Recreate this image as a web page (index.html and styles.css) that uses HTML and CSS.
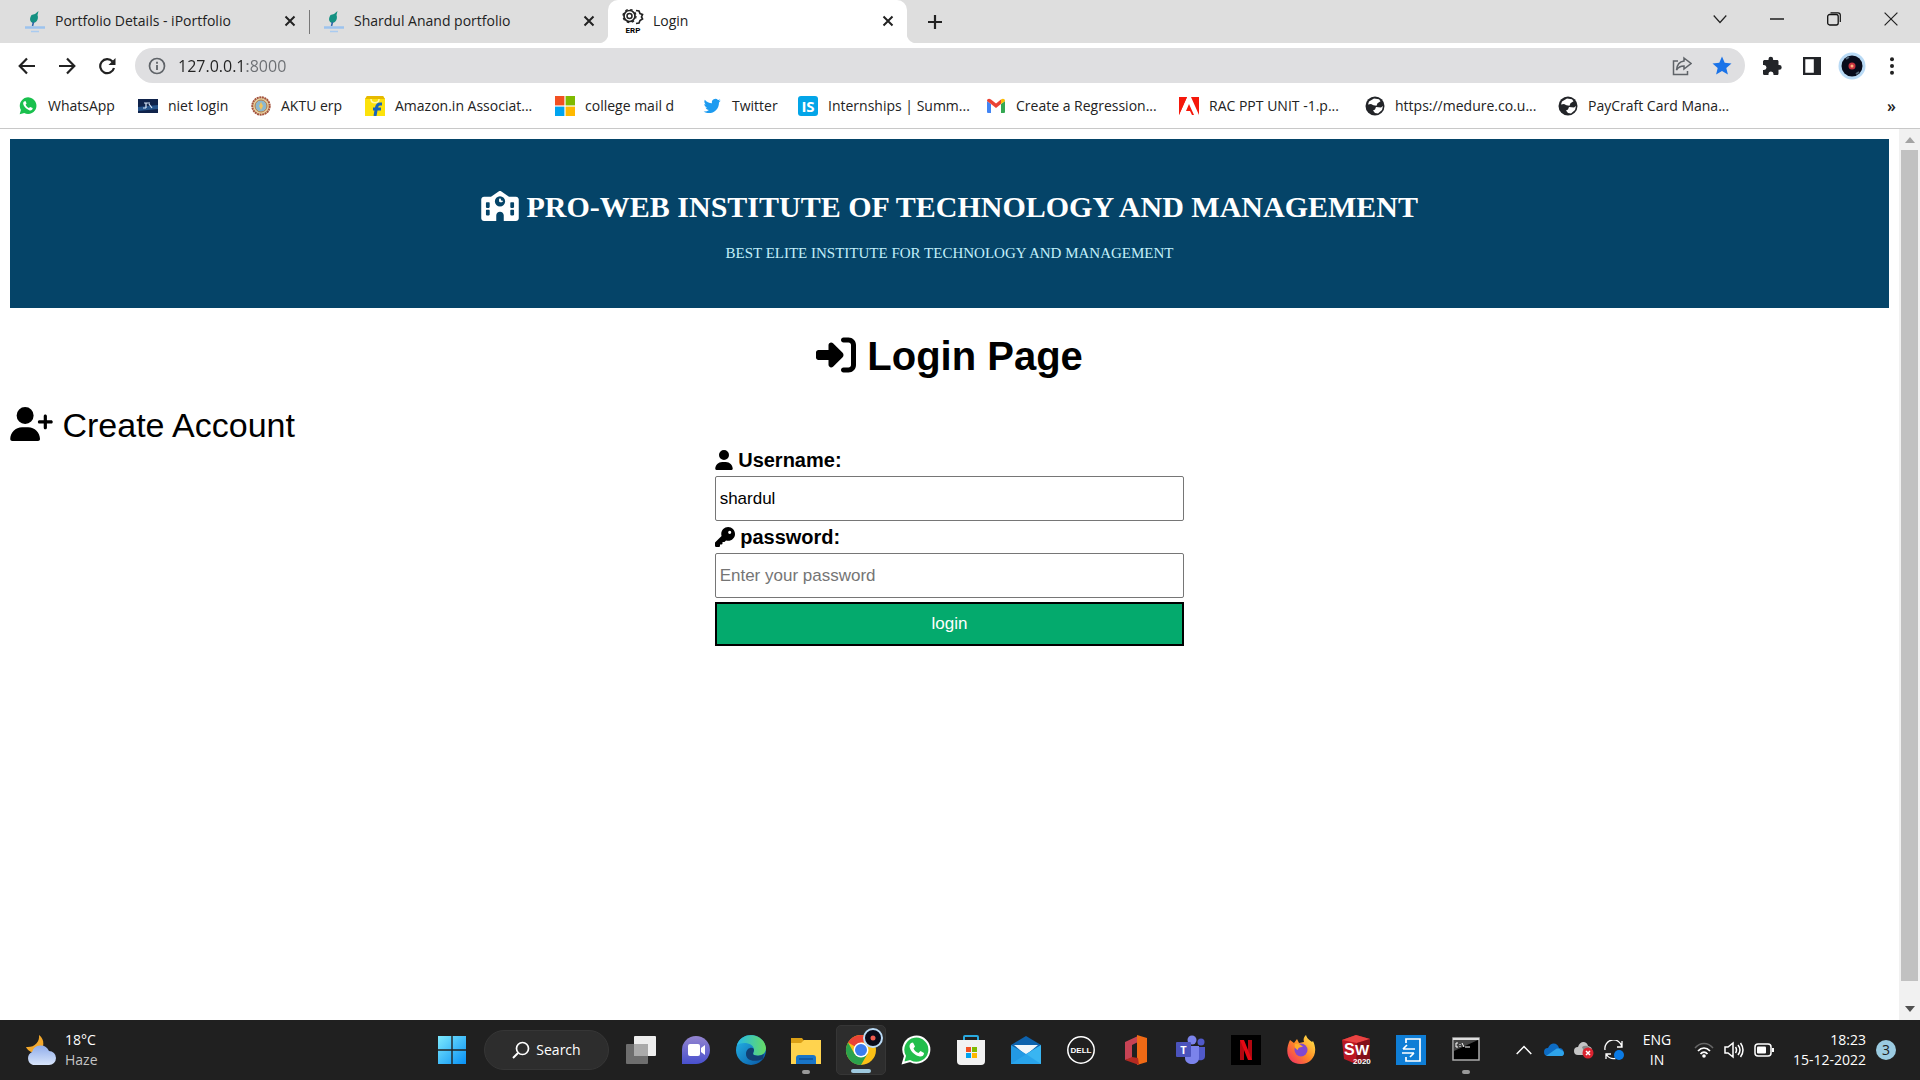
FILE: index.html
```html
<!DOCTYPE html>
<html lang="en">
<head>
<meta charset="utf-8">
<title>Login</title>
<link rel="stylesheet" href="styles.css">
</head>
<body>
<svg class="defs" aria-hidden="true">
  <defs>
    <symbol id="close" viewBox="0 0 12 12"><path d="M1.500 1.500l9 9M10.500 1.500l-9 9" fill="none" stroke="#222" stroke-width="2"/></symbol>
    <symbol id="plant" viewBox="0 0 22 24"><path d="M7.500 6l3.500-1 3.500-3-1 4c1.500 4-1 8-4.500 8-3-1-4-4-1.500-8z" fill="#149182"/><path d="M9.500 13l-1 4" stroke="#2b63a8" stroke-width="1.500"/><path d="M1 18.500h20" stroke="#9cc3ee" stroke-width="2.500"/><path d="M7 22.500h8" stroke="#a9cbf0" stroke-width="1.500"/></symbol>
    <symbol id="whatsapp" viewBox="0 0 24 24"><path d="M2 22l1.500-5.300A10 10 0 1 1 7.500 20.500z" fill="#19c04d"/><path d="M7.200 6.500l1.800-.4 1.300 3-1.200 1.500c.9 1.800 2.200 3 4 3.900l1.500-1.400 3 1.400c.3 2.300-2 3.400-3.600 2.900C9.700 16 6.200 11.500 6.200 8.800c0-1 .4-1.800 1-2.300z" fill="#fff"/></symbol>
    <symbol id="globe" viewBox="0 0 20 20"><circle cx="10" cy="10" r="9.500" fill="#222428"/><path d="M9 2.500l5 .8 1.500 2-3 2-1 2.500-3-.5L6 8l-3 .5 1-3zM11 11l5 .5 2-1.500-1 4-4 3.500-3-.5-2-2.500 2-1z" fill="#fff"/></symbol>
  </defs>
</svg>
<div class="screen">
  <header class="browser">
    <div class="tabs">
      <div class="tab"><svg class="fav"><use href="#plant"/></svg><span>Portfolio Details - iPortfolio</span><button class="tab-close" aria-label="Close tab"><svg><use href="#close"/></svg></button></div>
      <div class="tab divided"><svg class="fav"><use href="#plant"/></svg><span>Shardul Anand portfolio</span><button class="tab-close" aria-label="Close tab"><svg><use href="#close"/></svg></button></div>
      <div class="tab active"><svg class="fav" viewBox="0 0 22 24"><circle cx="7.500" cy="7" r="5.500" fill="none" stroke="#222" stroke-width="1.700"/><circle cx="7.500" cy="7" r="6.500" fill="none" stroke="#222" stroke-width="1.300" stroke-dasharray="2.500 2.600"/><circle cx="7.500" cy="7" r="2.500" fill="none" stroke="#222" stroke-width="1.500"/><path d="M14 1.500l3 .5 1 2.500 2.500 1-1 2.500 1 2-2.500 1.500-1 2.500-3 .5" fill="none" stroke="#222" stroke-width="1.700"/><text x="11" y="23.500" text-anchor="middle" font-size="8" font-weight="700" font-family="Roboto">ERP</text></svg><span>Login</span><button class="tab-close" aria-label="Close tab"><svg><use href="#close"/></svg></button></div>
      <button class="new-tab" aria-label="New tab"><svg width="16" height="16" viewBox="0 0 16 16"><path d="M8 1v14M1 8h14" stroke="#222" stroke-width="2.200"/></svg></button>
      <div class="window-controls">
        <button aria-label="Search tabs"><svg width="14" height="10" viewBox="0 0 14 10"><path d="M.7 1.500L7 8.500l6.300-7" fill="none" stroke="#222" stroke-width="1.200"/></svg></button>
        <button aria-label="Minimize"><svg width="14" height="10" viewBox="0 0 14 10"><path d="M0 5h14" stroke="#111" stroke-width="1.400"/></svg></button>
        <button aria-label="Restore"><svg width="14" height="14" viewBox="0 0 14 14"><rect x=".7" y="2.500" width="10.500" height="10.500" rx="2" fill="none" stroke="#111" stroke-width="1.300"/><path d="M3.500.8H11c1.300 0 2.300 1 2.300 2.300V10" fill="none" stroke="#111" stroke-width="1.200"/></svg></button>
        <button aria-label="Close"><svg width="14" height="14" viewBox="0 0 14 14"><path d="M.6.600l12.800 12.800M13.400.600L.6 13.400" stroke="#222" stroke-width="1.200"/></svg></button>
      </div>
    </div>
    <div class="toolbar">
      <nav class="history">
        <button aria-label="Back"><svg width="18" height="18" viewBox="0 0 18 18"><path d="M17 9H2M9 1.500L1.700 9 9 16.500" fill="none" stroke="#222" stroke-width="2.200"/></svg></button>
        <button aria-label="Forward"><svg width="18" height="18" viewBox="0 0 18 18"><path d="M1 9h15M9 1.500L16.300 9 9 16.500" fill="none" stroke="#222" stroke-width="2.200"/></svg></button>
        <button aria-label="Reload"><svg width="18" height="18" viewBox="0 0 18 18"><path d="M14.500 4.500A7 7 0 1 0 16 11" fill="none" stroke="#222" stroke-width="2.200"/><path d="M17.500 1v7h-7z" fill="#222"/></svg></button>
      </nav>
      <div class="omnibox">
        <svg width="18" height="18" viewBox="0 0 18 18"><circle cx="9" cy="9" r="7.500" fill="none" stroke="#5f6368" stroke-width="1.700"/><path d="M9 8v5M9 4.700v2" stroke="#5f6368" stroke-width="1.800"/></svg>
        <input class="url" type="text" value="127.0.0.1:8000" aria-label="Address">
        <button aria-label="Share"><svg width="20" height="20" viewBox="0 0 20 20"><path d="M6 5H1.500v13.500h14V15" fill="none" stroke="#5f6368" stroke-width="1.500"/><path d="M12 2l7 5.500-7 5.500v-3c-4 0-6 1.500-7.500 4C5 9 7.500 5.500 12 5z" fill="none" stroke="#5f6368" stroke-width="1.500"/></svg></button>
        <button aria-label="Bookmark"><svg width="20" height="20" viewBox="0 0 20 20"><path d="M10 .5l2.700 6.300 6.800.600-5.200 4.500 1.600 6.700L10 15l-5.900 3.600 1.600-6.700L.5 7.400l6.800-.6z" fill="#1a73e8"/></svg></button>
      </div>
      <div class="actions">
        <button aria-label="Extensions"><svg width="20" height="20" viewBox="0 0 20 20"><path d="M1 5.500C1 4.500 2 4 2.800 4H6.500V3a2.300 2.300 0 0 1 4.600 0v1H15c1 0 1.500.7 1.500 1.500V9h.8a2.400 2.400 0 0 1 0 4.800h-.8v3.700c0 1-.7 1.500-1.500 1.500h-3.500v-1a2.500 2.500 0 0 0-5 0v1H2.800C1.700 19 1 18.500 1 17.500V14h1a2.500 2.500 0 0 0 0-5H1z" fill="#222428"/></svg></button>
        <button aria-label="Side panel"><svg width="18" height="18" viewBox="0 0 18 18"><path d="M0 0h18v18H0zM2.300 2.300v13.400h8.500V2.300z" fill="#222428" fill-rule="evenodd"/></svg></button>
        <button aria-label="Profile"><svg width="28" height="28" viewBox="0 0 28 28"><circle cx="14" cy="14" r="13.500" fill="#b9daf5"/><circle cx="14" cy="14" r="10.500" fill="#080b1b"/><path d="M8 7l3-2M18 22l3-2" stroke="#53677a" stroke-width="2"/><circle cx="14" cy="14" r="3.500" fill="#c5313f"/><circle cx="14" cy="14" r="1.500" fill="#ffb27c"/></svg></button>
        <button aria-label="Menu"><svg width="6" height="18" viewBox="0 0 6 18"><g fill="#222"><circle cx="3" cy="2.200" r="2"/><circle cx="3" cy="9" r="2"/><circle cx="3" cy="15.800" r="2"/></g></svg></button>
      </div>
    </div>
    <nav class="bookmarks">
      <a href="#"><svg><use href="#whatsapp"/></svg>WhatsApp</a>
      <a href="#"><svg viewBox="0 0 20 20"><path d="M0 3h20v14H0z" fill="#10234b"/><path d="M0 11l20-2v4L0 15z" fill="#27558c"/><path d="M6 7h6M8 7v5M11 8l3 4M5 12h3" stroke="#dce9fa" stroke-width="1.200"/></svg>niet login</a>
      <a href="#"><svg viewBox="0 0 20 20"><circle cx="10" cy="10" r="8.700" fill="#e8d3a2" stroke="#a4533d" stroke-width="2" stroke-dasharray="2 .6"/><circle cx="10" cy="10" r="6" fill="#8bb8cf" stroke="#b77c46"/><path d="M10 6l2 4-2 4-2-4z" fill="#f3c55c"/></svg>AKTU erp</a>
      <a href="#"><svg viewBox="0 0 20 20"><path d="M0 3L2 0h16l2 3v17H0z" fill="#fce20b"/><path d="M0 3L2 0h16l2 3z" fill="#e6b900"/><path d="M6 3c0 5 8 5 8 0" fill="none" stroke="#fff7a5" stroke-width="1.500"/><path d="M17 8h-2c-2 0-3 1-3.500 3.500L10 20M8 13h8" fill="none" stroke="#1864bd" stroke-width="3"/></svg>Amazon.in Associat...</a>
      <a href="#"><svg viewBox="0 0 20 20"><path d="M0 0h9.400v9.400H0z" fill="#f25022"/><path d="M10.600 0H20v9.400h-9.400z" fill="#7fba00"/><path d="M0 10.600h9.400V20H0z" fill="#00a4ef"/><path d="M10.600 10.600H20V20h-9.400z" fill="#ffb900"/></svg>college mail d</a>
      <a href="#"><svg viewBox="0 0 24 24"><path d="M22.500 5.500c-.8.4-1.600.6-2.400.7.900-.5 1.500-1.300 1.800-2.300-.8.5-1.700.8-2.700 1a4.200 4.200 0 0 0-7.200 3.900C8.500 8.600 5.400 6.900 3.400 4.400c-1.100 1.900-.6 4.400 1.300 5.700-.7 0-1.300-.2-1.900-.5 0 2 1.400 3.800 3.400 4.200-.6.200-1.300.2-1.900.1.500 1.700 2.100 2.900 4 2.900A8.500 8.500 0 0 1 2 18.600C9.700 23.500 20.500 18.400 20.400 7.700c.8-.6 1.500-1.300 2.100-2.200z" fill="#1d9bf0"/></svg>Twitter</a>
      <a href="#"><svg viewBox="0 0 20 20"><rect width="20" height="20" rx="3" fill="#03a5e8"/><text x="10" y="15.500" text-anchor="middle" font-size="15" font-weight="700" font-family="Open Sans" fill="#fff">IS</text></svg>Internships | Summ...</a>
      <a href="#"><svg viewBox="0 0 20 20"><path d="M1 5l4 3v9H2q-1 0-1-1z" fill="#4285f4"/><path d="M15 8l4-3v11q0 1-1 1h-3z" fill="#34a853"/><path d="M1 5c0-2 2-3 4-1.500L10 7.500l5-4V8l-5 4-5-4-4-3z" fill="#ea4335"/><path d="M15 3.500c2-1.500 4-.5 4 1.500L15 8z" fill="#fbbc04"/></svg>Create a Regression...</a>
      <a href="#"><svg viewBox="0 0 20 20"><path d="M0 1h20v18H0z" fill="#f5180b"/><path d="M8 1h4l8 18h-5L10 8l-3 7h4l2 4H0z" fill="#fff"/><path d="M0 1h8L0 19z" fill="#f5180b"/></svg>RAC PPT UNIT -1.p...</a>
      <a href="#"><svg><use href="#globe"/></svg>https://medure.co.u...</a>
      <a href="#"><svg><use href="#globe"/></svg>PayCraft Card Mana...</a>
      <button class="more">»</button>
    </nav>
  </header>
  <div class="viewport">
    <main class="page">
      <section class="banner">
        <h1><svg width="38" height="30" viewBox="0 0 640 512"><path fill="currentColor" fill-rule="evenodd" d="M337.800 5.400C327-1.800 313-1.800 302.200 5.400L166.300 96 48 96C21.500 96 0 117.500 0 144L0 464c0 26.500 21.500 48 48 48l208 0 0-96c0-35.300 28.700-64 64-64s64 28.700 64 64l0 96 208 0c26.500 0 48-21.500 48-48l0-320c0-26.500-21.500-48-48-48L473.700 96zM96 192l32 0c8.800 0 16 7.200 16 16l0 64c0 8.800-7.200 16-16 16l-32 0c-8.800 0-16-7.200-16-16l0-64c0-8.800 7.200-16 16-16zM96 320l32 0c8.800 0 16 7.200 16 16l0 64c0 8.800-7.200 16-16 16l-32 0c-8.800 0-16-7.200-16-16l0-64c0-8.800 7.200-16 16-16zM496 208c0-8.800 7.200-16 16-16l32 0c8.800 0 16 7.200 16 16l0 64c0 8.800-7.200 16-16 16l-32 0c-8.800 0-16-7.200-16-16zM496 336c0-8.800 7.200-16 16-16l32 0c8.800 0 16 7.200 16 16l0 64c0 8.800-7.200 16-16 16l-32 0c-8.800 0-16-7.200-16-16zM232 176a88 88 0 1 1 176 0 88 88 0 1 1 -176 0zm88-48c-8.800 0-16 7.200-16 16l0 32c0 8.800 7.200 16 16 16l32 0c8.800 0 16-7.200 16-16s-7.200-16-16-16l-16 0 0-16c0-8.800-7.200-16-16-16z"/></svg> PRO-WEB INSTITUTE OF TECHNOLOGY AND MANAGEMENT</h1>
        <p>BEST ELITE INSTITUTE FOR TECHNOLOGY AND MANAGEMENT</p>
      </section>
      <h2 class="title"><svg width="40" height="40" viewBox="0 0 512 512"><path d="M217.900 105.900L340.700 228.700c7.200 7.200 11.300 17.100 11.300 27.300s-4.100 20.100-11.300 27.300L217.900 406.100c-6.400 6.400-15 9.900-24 9.900c-18.700 0-33.900-15.200-33.900-33.900l0-62.100L32 320c-17.700 0-32-14.300-32-32l0-64c0-17.700 14.300-32 32-32l128 0 0-62.100c0-18.700 15.200-33.900 33.900-33.900c9 0 17.600 3.600 24 9.900zM352 416l64 0c17.700 0 32-14.300 32-32l0-256c0-17.700-14.300-32-32-32l-64 0c-17.700 0-32-14.300-32-32s14.300-32 32-32l64 0c53 0 96 43 96 96l0 256c0 53-43 96-96 96l-64 0c-17.700 0-32-14.300-32-32s14.300-32 32-32z"/></svg> Login Page</h2>
      <a class="create" href="#"><svg width="43" height="34" viewBox="0 0 640 512"><path d="M96 128a128 128 0 1 1 256 0A128 128 0 1 1 96 128zM0 482.300C0 383.800 79.800 304 178.300 304l91.400 0C368.200 304 448 383.800 448 482.300c0 16.400-13.300 29.700-29.700 29.700L29.700 512C13.300 512 0 498.700 0 482.300zM504 312l0-64-64 0c-13.300 0-24-10.700-24-24s10.700-24 24-24l64 0 0-64c0-13.300 10.700-24 24-24s24 10.700 24 24l0 64 64 0c13.300 0 24 10.700 24 24s-10.700 24-24 24l-64 0 0 64c0 13.300-10.700 24-24 24s-24-10.700-24-24z"/></svg> Create Account</a>
      <form class="login">
        <label for="username"><svg width="18" height="20" viewBox="0 0 448 512"><path d="M224 256A128 128 0 1 0 224 0a128 128 0 1 0 0 256zm-45.700 48C79.800 304 0 383.800 0 482.300C0 498.700 13.300 512 29.700 512l388.600 0c16.400 0 29.700-13.300 29.700-29.700C448 383.800 368.200 304 269.700 304l-91.400 0z"/></svg> Username:</label>
        <input id="username" type="text" value="shardul">
        <label for="password"><svg width="20" height="20" viewBox="0 0 512 512"><path d="M336 352c97.200 0 176-78.800 176-176S433.200 0 336 0S160 78.800 160 176c0 18.700 2.900 36.800 8.300 53.700L7 391c-4.500 4.500-7 10.600-7 17l0 80c0 13.300 10.700 24 24 24l80 0c13.300 0 24-10.700 24-24l0-40 40 0c13.300 0 24-10.700 24-24l0-40 40 0c6.400 0 12.500-2.500 17-7l33.300-33.300c16.900 5.400 35 8.300 53.700 8.300zM376 96a40 40 0 1 1 0 80 40 40 0 1 1 0-80z"/></svg> password:</label>
        <input id="password" type="password" placeholder="Enter your password">
        <button type="button">login</button>
      </form>
    </main>
    <div class="scrollbar"><svg width="10" height="6" viewBox="0 0 10 6"><path d="M0 6l5-6 5 6z" fill="#a3a3a3"/></svg><div class="thumb"></div><svg width="10" height="6" viewBox="0 0 10 6"><path d="M0 0h10L5 6z" fill="#505050"/></svg></div>
  </div>
  <footer class="taskbar">
    <div class="weather">
      <svg width="32" height="32" viewBox="0 0 32 32"><defs><linearGradient id="cloud" x2="0" y2="1"><stop stop-color="#8facea"/><stop offset="1" stop-color="#d8e5fb"/></linearGradient></defs><path d="M14 1c6 4 6 14-1 17-5 2-10-1-12-5 8 1 14-5 13-12z" fill="#f3a82c"/><path d="M8 31a7 7 0 0 1-1-13 9 9 0 0 1 17-1 7 7 0 0 1 0 14z" fill="url(#cloud)"/></svg>
      <div><div>18°C</div><div class="dim">Haze</div></div>
    </div>
    <div class="apps">
      <button aria-label="Start"><svg viewBox="0 0 30 30"><defs><linearGradient id="win" x2="1" y2="1"><stop stop-color="#7eeafd"/><stop offset="1" stop-color="#0790f5"/></linearGradient></defs><path d="M1 1h13.300v13.300H1zM15.700 1H29v13.300H15.700zM1 15.700h13.300V29H1zM15.700 15.700H29V29H15.700z" fill="url(#win)"/></svg></button>
      <button class="search"><svg viewBox="0 0 18 18"><circle cx="10.500" cy="7.500" r="6" fill="none" stroke="#fff" stroke-width="1.700"/><path d="M6 12l-5 5" stroke="#fff" stroke-width="2"/></svg>Search</button>
      <button aria-label="Task view"><svg viewBox="0 0 30 30"><rect y="9" width="22" height="20" rx="1" fill="#6e6e6e"/><rect x="8" y="1" width="22" height="20" rx="1" fill="#eee"/><path d="M8 9h14v12H8z" fill="#aaa"/></svg></button>
      <button aria-label="Chat"><svg viewBox="0 0 30 30"><defs><linearGradient id="chat" x2="0" y2="1"><stop stop-color="#9485cf"/><stop offset="1" stop-color="#4850ce"/></linearGradient></defs><path d="M1 29V15A14 14 0 1 1 15 29z" fill="url(#chat)"/><rect x="7" y="9" width="12" height="12" rx="2" fill="#fff"/><path d="M20 13l4-3v10l-4-3z" fill="#fff"/></svg></button>
      <button aria-label="Edge"><svg viewBox="0 0 30 30"><defs><linearGradient id="edge" y2="1" x2="1"><stop stop-color="#25b9e9"/><stop offset="1" stop-color="#0753a3"/></linearGradient><linearGradient id="edge2"><stop stop-color="#25b9e9"/><stop offset="1" stop-color="#67dc62"/></linearGradient></defs><circle cx="15" cy="15" r="15" fill="url(#edge)"/><path d="M1 10C5-4 28-3 30 13c0 7-7 9-12 7-2-1 0-3 0-5 0-7-11-9-17-5z" fill="url(#edge2)"/><path d="M18 20c-2-1 0-3 0-5 0-4-8-3-8 4 0 6 7 9 17 5 2-1-1 1 1-5-3 2-7 2-10 1z" fill="#123f72"/></svg></button>
      <button class="running" aria-label="File Explorer"><svg viewBox="0 0 30 30"><path d="M0 3h11l3 4h16v22H0z" fill="#dba016"/><path d="M0 8h10l3-3h17v24H0z" fill="#ffd34e"/><path d="M5 29v-6q0-3 3-3h14q3 0 3 3v6z" fill="#1975c8"/><path d="M8 24h14" stroke="#0c539c" stroke-width="1.500"/></svg></button>
      <button class="running current" aria-label="Chrome"><svg class="chrome" viewBox="0 0 38 38"><circle cx="16" cy="22" r="15" fill="#fbc116"/><path d="M16 22L3 14.500A15 15 0 0 1 29 14.500H16z" fill="#ea4335"/><path d="M3 14.500A15 15 0 0 0 16 37l6.500-11.300L16 22l-6.500 3.700z" fill="#2ba24c"/><circle cx="16" cy="22" r="7.500" fill="#fff"/><circle cx="16" cy="22" r="6" fill="#3b7ded"/><circle cx="28" cy="10" r="9" fill="#080b1b" stroke="#b9daf5" stroke-width="2"/><circle cx="28" cy="10" r="2.500" fill="#ed5b51"/></svg></button>
      <button aria-label="WhatsApp"><svg viewBox="0 0 30 30"><path d="M2 28l2-7A13 13 0 1 1 9 26z" fill="#22be4c" stroke="#fff" stroke-width="2"/><path d="M10 8l2-.5 2 4-1.500 2c1 2 2.500 3.500 5 4.500l2-2 3.500 2c0 3-2.500 4-5 3.300C13 20 8.500 15 8.500 11c0-1 .5-2 1.500-3z" fill="#fff"/></svg></button>
      <button aria-label="Microsoft Store"><svg viewBox="0 0 30 30"><path d="M8 6V2q0-1 1-1h12q1 0 1 1v4" fill="none" stroke="#29a9df" stroke-width="2"/><path d="M1 5h28v21q0 4-4 4H5q-4 0-4-4z" fill="#f2f2f2"/><path d="M10 12h5v5h-5z" fill="#f25022"/><path d="M16 12h5v5h-5z" fill="#7fba00"/><path d="M10 18h5v5h-5z" fill="#00a4ef"/><path d="M16 18h5v5h-5z" fill="#ffb900"/></svg></button>
      <button aria-label="Mail"><svg viewBox="0 0 30 30"><path d="M0 10L15 1l15 9-15 10z" fill="#0d62ad"/><path d="M3 10h24l-12 10z" fill="#f1f6fa"/><path d="M0 10l15 9 15-9v19H0z" fill="#2399e4"/><path d="M30 10L0 29h30z" fill="#39b5f2"/><path d="M15 19l15 10H0z" fill="#1f99e6" opacity=".6"/></svg></button>
      <button aria-label="Dell"><svg viewBox="0 0 30 30"><circle cx="15" cy="15" r="13.200" fill="none" stroke="#fff" stroke-width="1.500"/><text x="15" y="18" text-anchor="middle" font-size="8" font-weight="700" font-family="Liberation Sans" fill="#fff">DELL</text></svg></button>
      <button aria-label="Office"><svg viewBox="0 0 30 30"><path d="M4 7L17 1v6l-6 3v13l-7 2z" fill="#c74355"/><path d="M16 0l10 3v24l-10 3V0z" fill="#f06a15"/><path d="M4 25l7-3 6 1 1 7z" fill="#b52a22"/></svg></button>
      <button aria-label="Teams"><svg viewBox="0 0 30 30"><circle cx="25" cy="7" r="3.500" fill="#5059c9"/><circle cx="16" cy="5" r="4.500" fill="#7b83eb"/><path d="M20 12h9v9c0 5-6 5-8 3z" fill="#5059c9"/><path d="M9 11h14v12c0 8-14 8-14 0z" fill="#7b83eb"/><rect y="7" width="15" height="15" rx="1" fill="#4b53bc"/><text x="7.500" y="18.500" text-anchor="middle" font-size="11" font-weight="700" font-family="Open Sans" fill="#fff">T</text></svg></button>
      <button aria-label="Netflix"><svg viewBox="0 0 30 30"><path d="M0 0h30v30H0z" fill="#000"/><path d="M9 5h4v20H9zM17 5h4v20h-4z" fill="#b20710"/><path d="M9 5h4l8 20h-4z" fill="#e50914"/></svg></button>
      <button aria-label="Firefox"><svg viewBox="0 0 30 30"><defs><linearGradient id="fox" x1="1" x2="0" y2="1"><stop stop-color="#fff44f"/><stop offset=".5" stop-color="#ff8a25"/><stop offset="1" stop-color="#ef236c"/></linearGradient></defs><path d="M4 5l4 3 3-4 2 4 5-1c-1-3 0-5 2-7 1 4 4 5 6 7l1-1c6 12-1 23-12 23C2 29-2 17 4 5z" fill="url(#fox)"/><circle cx="15" cy="15" r="6.500" fill="#8148d0"/><path d="M9 9c4-1 6 1 8 3-4 0-5 1-5 3-3-1-4-4-3-6z" fill="#ffad28"/></svg></button>
      <button aria-label="SolidWorks"><svg viewBox="0 0 30 30"><path d="M1 5l14-5 14 4v20l-14 5L3 24z" fill="#bb1823"/><path d="M1 5l14-5 14 4-13 4z" fill="#e94342"/><path d="M16 8l13-4v20l-14 5z" fill="#831019"/><text x="3" y="20" font-size="16" font-weight="700" font-family="Liberation Sans" fill="#fff">S</text><text x="14" y="20" font-size="15" font-weight="700" font-family="Liberation Sans" fill="#fff">W</text><text x="12" y="29" font-size="8" font-weight="700" font-family="Liberation Sans" fill="#fff">2020</text></svg></button>
      <button aria-label="Your Phone"><svg viewBox="0 0 30 30"><path d="M0 0h30v30H0z" fill="#0f7ed6"/><path d="M10 8V4h14v22H10v-4M7 14h12M7 14l4-4M6 18h12M18 18l-4 4" fill="none" stroke="#fff" stroke-width="1.700"/></svg></button>
      <button class="running" aria-label="Command Prompt"><svg viewBox="0 0 30 30"><path d="M2 3h26v22H2z" fill="#000" stroke="#aaa" stroke-width="1.500"/><path d="M2 4h26" stroke="#ddd" stroke-width="2"/><path d="M3 5h24L3 16z" fill="#444"/><path d="M7 8H5v4h2M9 9v1M9 11v1M11 8l2 4M14 12h5" fill="none" stroke="#fff"/></svg></button>
    </div>
    <div class="tray">
      <button aria-label="Hidden icons"><svg width="16" height="10" viewBox="0 0 16 10"><path d="M.7 9L8 1.500 15.300 9" fill="none" stroke="#fff" stroke-width="1.500"/></svg></button>
      <button aria-label="OneDrive"><svg width="20" height="14" viewBox="0 0 20 14"><path d="M4 13a4 4 0 0 1 0-8C7-2 14 0 15 5c6 0 6 8 1 8z" fill="#0d6cc4"/><path d="M2 13L12 6c2-1 4 0 5 1 4 1 4 6 0 6z" fill="#2ea3ea"/></svg></button>
      <button aria-label="Cloud sync error"><svg width="20" height="18" viewBox="0 0 20 18"><path d="M4 14a4 4 0 0 1 0-8C6-1 13 0 14 5c6 1 5 9 1 9z" fill="#c5c5c5"/><path d="M8 6c4-3 9 0 9 5l-6 2z" fill="#888"/><circle cx="14" cy="12" r="5.500" fill="#db2430"/><path d="M12 10l4 4M16 10l-4 4" stroke="#fff" stroke-width="1.500"/></svg></button>
      <button aria-label="Windows Update"><svg width="20" height="20" viewBox="0 0 20 20"><path d="M1 10a8.500 8.500 0 0 1 17-3M18 1v6h-5M2 19v-5h5M2.500 14.500q3 5 9 4" fill="none" stroke="#fff" stroke-width="1.300"/><circle cx="15" cy="15" r="5" fill="#0b7be5"/></svg></button>
      <div class="lang"><div>ENG</div><div>IN</div></div>
      <button aria-label="Wi-Fi"><svg width="20" height="16" viewBox="0 0 20 16"><path d="M1 6c5-6 13-6 18 0" fill="none" stroke="#666" stroke-width="1.500"/><path d="M4 9c3.500-4 8.500-4 12 0M6.500 12c2-2.500 5-2.500 7 0" fill="none" stroke="#fff" stroke-width="1.700"/><circle cx="10" cy="14" r="1.800" fill="#fff"/></svg></button>
      <button aria-label="Volume"><svg width="20" height="18" viewBox="0 0 20 18"><path d="M1 6h3l5-4v14l-5-4H1zM11.500 6q2 3 0 6M14 4q4 5 0 10M16.500 2q5 7 0 14" fill="none" stroke="#fff" stroke-width="1.500"/></svg></button>
      <button aria-label="Battery"><svg width="20" height="14" viewBox="0 0 20 14"><rect x="1" y="1" width="16" height="12" rx="3" fill="none" stroke="#fff" stroke-width="1.500"/><rect x="3" y="3.500" width="9" height="7" rx="1" fill="#fff"/><path d="M19 5v4" stroke="#fff" stroke-width="2"/></svg></button>
      <div class="clock"><div>18:23</div><div>15-12-2022</div></div>
      <button class="badge" aria-label="Notifications">3</button>
    </div>
  </footer>
</div>
</body>
</html>
```
FILE: styles.css
```css
* { box-sizing: border-box; }
body { margin: 0; background: #fff; color: #000; font-family: "Liberation Sans", Arial, sans-serif; }
button { padding: 0; border: 0; background: none; color: inherit; font: inherit; display: flex; align-items: center; justify-content: center; }
a { color: inherit; text-decoration: none; }
.defs { position: absolute; width: 0; height: 0; }
.screen { display: flex; flex-direction: column; min-height: 100vh; }

/* Browser window */
.browser { font-family: "Open Sans", "Segoe UI", sans-serif; font-size: 14px; color: #222; border-bottom: 1px solid #c8c8c8; }
.tabs { display: flex; height: 43px; padding-left: 10px; background: #dedede; }
.tab { display: flex; align-items: center; flex: 0 1 299px; gap: 9px; padding: 0 11px 2px 14px; position: relative; white-space: nowrap; }
.tab span { flex: 1; }
.fav { width: 22px; height: 24px; }
.tab-close { width: 16px; height: 24px; }
.tab-close svg { width: 12px; height: 12px; }
.divided::before { content: ""; position: absolute; left: 0; top: 10px; height: 24px; width: 1px; background: #777; }
.active { background: #fff; border-radius: 10px 10px 0 0; }
.active::before, .active::after { content: ""; position: absolute; bottom: 0; width: 10px; height: 10px; }
.active::before { right: 100%; background: radial-gradient(circle at 0 0, #dedede 10px, #fff 11px); }
.active::after { left: 100%; background: radial-gradient(circle at 100% 0, #dedede 10px, #fff 11px); }
.new-tab { width: 56px; }
.window-controls { display: flex; margin-left: auto; padding: 0 1px 6px 0; }
.window-controls button { width: 57px; }
.toolbar { display: flex; align-items: center; height: 45px; padding: 0 8px 0 7px; }
.history { display: flex; width: 128px; }
.history button { width: 40px; height: 36px; }
.omnibox { display: flex; align-items: center; flex: 1; height: 35px; padding: 0 3px 0 13px; border-radius: 18px; background: #dfdfe1; }
.omnibox button { width: 40px; height: 32px; }
.url { flex: 1; border: 0; padding: 0 0 0 12px; font: 16px/24px "Open Sans", sans-serif; color: transparent; background: linear-gradient(90deg, #222 81px, #6b6e72 81px); -webkit-background-clip: text; background-clip: text; }
.actions { display: flex; margin-left: 7px; }
.actions button { width: 40px; height: 36px; }
.bookmarks { display: grid; grid-template-columns: 120px 113px 114px 190px 147px 96px 188px 193px 186px 193px 1fr auto; align-items: center; height: 40px; padding: 0 24px 5px 18px; }
.bookmarks a { display: flex; align-items: center; gap: 10px; white-space: nowrap; }
.bookmarks svg { width: 20px; height: 20px; }
.more { font-size: 16px; font-weight: 600; }

/* Login page */
.viewport { display: flex; flex: 1; }
.page { flex: 1; padding: 10px; }
.banner { padding: 50px 0 45px; background: #054468; text-align: center; font-family: "Liberation Serif", "Times New Roman", serif; }
.banner h1 { margin: 0 0 18px; font-size: 30px; line-height: 36px; color: #fff; }
.banner p { margin: 0; font-size: 15px; line-height: 20px; color: #c2f0fb; }
.page h1 svg, .page h2 svg, .page label svg, .create svg { vertical-align: -0.125em; }
.title { margin: 25px 0 27px; font-size: 40px; line-height: 46px; text-align: center; }
.create { display: block; font-size: 34px; line-height: 38px; }
.login { display: flex; flex-direction: column; gap: 4px; width: 25%; margin: 4px auto 0; }
.login label { font-size: 20px; font-weight: 700; line-height: 24px; }
.login input { height: 45px; padding: 1px 4px; border: 1px solid #767676; border-radius: 2px; font: 17px "Liberation Sans", Arial, sans-serif; color: #000; }
.login input::placeholder { color: #757575; }
.login button { height: 44px; padding-bottom: 1px; border: 2px solid #000; background: #04aa6d; color: #fff; font-size: 17px; }
.scrollbar { display: flex; flex-direction: column; align-items: center; gap: 7px; width: 21px; padding: 8px 0; background: #f1f1f1; }
.thumb { flex: 1; width: 17px; margin-bottom: 18px; background: #c1c1c1; }

/* Taskbar */
.taskbar { display: grid; grid-template-columns: 1fr auto 1fr; align-items: center; height: 60px; padding-right: 2px; background: #202020; color: #fff; font: 14px/20px "Open Sans", "Segoe UI", sans-serif; }
.weather { display: flex; align-items: center; gap: 8px; padding-left: 25px; }
.dim { color: #c4c4c4; }
.apps { display: flex; align-items: center; gap: 5px; }
.apps button { position: relative; width: 50px; height: 50px; border-radius: 5px; }
.apps svg { width: 30px; height: 30px; }
.apps .search { width: 125px; height: 40px; margin: 0 2px; gap: 6px; border: 1px solid #363636; border-radius: 20px; background: #2d2d2d; }
.apps .search svg { width: 18px; height: 18px; }
.apps .current { background: #2d2d2d; border: 1px solid #363636; }
.apps .chrome { width: 38px; height: 38px; margin: -7px 0 0 5px; }
.running::after { content: ""; position: absolute; bottom: 1px; left: 21px; width: 8px; height: 4px; border-radius: 2px; background: #999; }
.current::after { left: 14px; width: 20px; background: #9ec9df; }
.tray { display: flex; align-items: center; justify-content: flex-end; padding-right: 22px; }
.tray button { width: 30px; height: 40px; }
.lang { width: 56px; margin-right: 4px; text-align: center; }
.clock { width: 87px; text-align: right; }
.tray .badge { width: 20px; height: 20px; margin-left: 10px; border-radius: 50%; background: #9bcbe1; color: #202020; font-size: 14px; }
```
